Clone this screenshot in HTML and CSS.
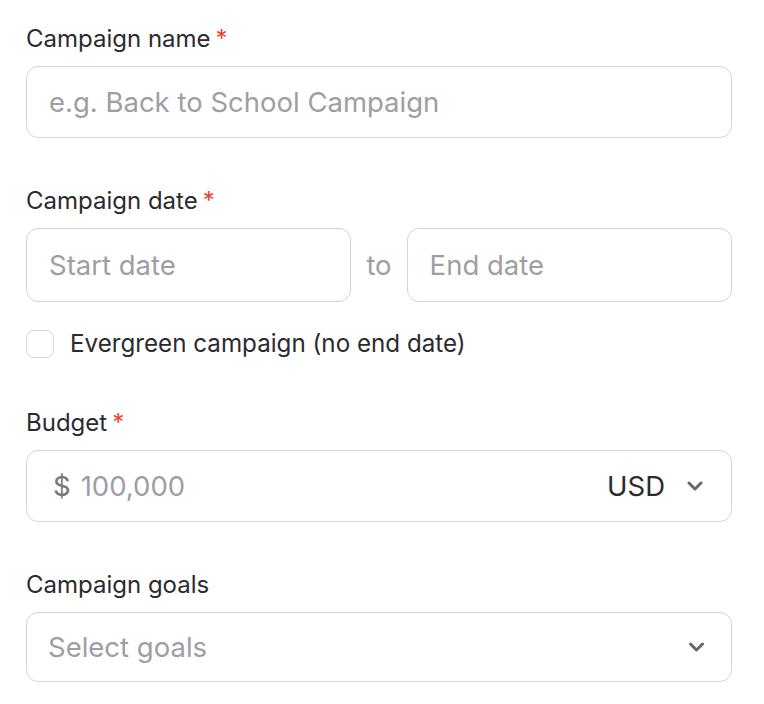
FILE: index.html
```html
<html lang="en">
    <head>
        <title>New Campaign</title>

        <link rel="stylesheet" href="styles.css">
    </head>

    <body>
        <form class="form">
            <div class="field">
                <label for="name">Campaign name<span class="req">*</span></label>
                <input id="name" class="box" placeholder="e.g. Back to School Campaign"/>
            </div>

            <div class="field">
                <label for="start">Campaign date<span class="req">*</span></label>
                <div class="range">
                    <input id="start" class="box" placeholder="Start date"/>
                    <span class="to">to</span>
                    <input id="end" class="box" placeholder="End date"/>
                </div>
                <div class="check">
                    <input id="evergreen" type="checkbox"/>
                    <label for="evergreen">Evergreen campaign (no end date)</label>
                </div>
            </div>

            <div class="field">
                <label for="budget">Budget<span class="req">*</span></label>
                <div class="box money">
                    <span class="currency">$</span>
                    <input id="budget" placeholder="100,000"/>
                    <span class="unit">USD</span>
                    <svg class="chevron" viewBox="0 0 16 10" width="16" height="10">
                        <path d="M2 2 L8 8 L14 2" fill="none" stroke="currentColor" stroke-width="3" stroke-linecap="round" stroke-linejoin="round"/>
                    </svg>
                </div>
            </div>

            <div class="field">
                <label for="goals">Campaign goals</label>
                <div class="box select">
                    <span class="placeholder">Select goals</span>
                    <svg class="chevron" viewBox="0 0 16 10" width="17" height="10">
                        <path d="M2 2 L8 8 L14 2" fill="none" stroke="currentColor" stroke-width="3" stroke-linecap="round" stroke-linejoin="round"/>
                    </svg>
                </div>
            </div>
        </form>
    </body>
</html>
```

FILE: styles.css
```css
body {
    margin: 0;
    padding: 0;
    background-color: #fff;

    font-family: Inter, "Noto Sans", sans-serif;
    color: #2b2b2f;
}

.form {
    display: flex;
    flex-direction: column;
    gap: 52px;

    width: 706px;
    padding: 28px 0 0 26px;
    margin: 0;
}

.field {
    display: flex;
    flex-direction: column;
}

.field > label {
    font-size: 24px;
    line-height: 22px;
    margin-bottom: 16px;
}

.req {
    color: #e4472d;
    margin-left: 5px;
}

.box {
    box-sizing: border-box;
    height: 72px;
    border: 1px solid #d4d4d8;
    border-radius: 12px;
    padding: 0 22px;
    background-color: #fff;

    font-family: inherit;
    font-size: 27.5px;
    color: #2b2b2f;
    outline: none;
}

.box::placeholder, .box input::placeholder, .placeholder {
    color: #9e9ea4;
}

.range {
    display: flex;
    align-items: center;
    gap: 15px;
}

.range .box {
    flex: 1;
    min-width: 0;
    height: 74px;
}

.to {
    font-size: 27.5px;
    color: #9e9ea4;
}

.check {
    display: flex;
    align-items: center;
    gap: 16px;
    margin: 28px 0 2px;

    font-size: 24.2px;
    line-height: 28px;
}

.check input {
    appearance: none;
    width: 28px;
    height: 28px;
    margin: 0;
    border: 1px solid #d4d4d8;
    border-radius: 8px;
}

.money, .select {
    display: flex;
    align-items: center;
}

.money {
    padding: 0 28px 0 26px;
}

.currency {
    color: #77777d;
    margin-right: 10px;
}

.money input {
    flex: 1;
    min-width: 0;
    border: 0;
    padding: 0;
    outline: none;
    font-family: inherit;
    font-size: 27.5px;
}

.unit {
    margin-right: 22px;
}

.select {
    justify-content: space-between;
    height: 70px;
    padding: 0 26px 0 21px;
}

.chevron {
    color: #66666c;
}
```
